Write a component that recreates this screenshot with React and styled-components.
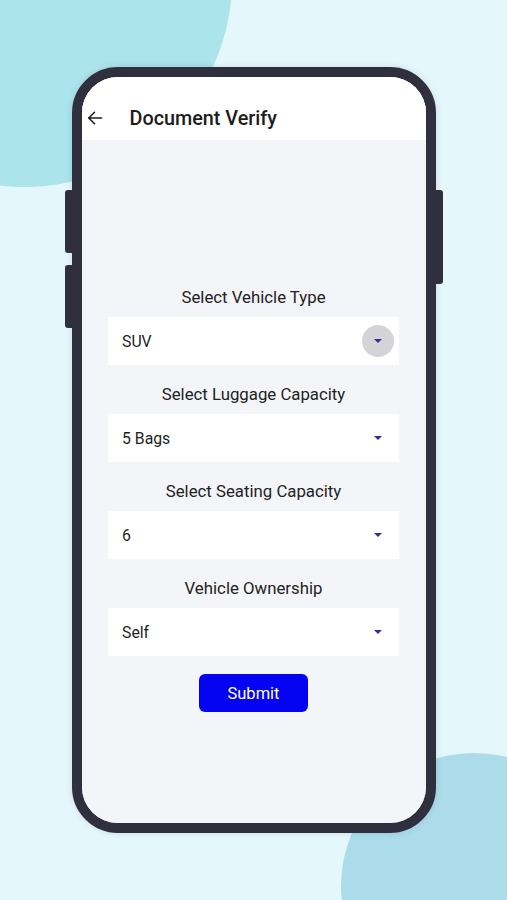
import React from 'react';
import styled, { createGlobalStyle } from 'styled-components';

const GlobalStyle = createGlobalStyle`
    body {
        margin: 0;
        font-family: Roboto, "Noto Sans", Arial, sans-serif;
    }
`;

const Page = styled.div`
    position: relative;
    width: 507px;
    height: 900px;
    overflow: hidden;
    background: #e4f8fc;
    display: flex;
    justify-content: center;
    padding-top: 67px;
    box-sizing: border-box;
`;

const Blob = styled.div`
    position: absolute;
    border-radius: 50%;
    background: ${(p) => p.color};
    left: ${(p) => p.cx - p.r}px;
    top: ${(p) => p.cy - p.r}px;
    width: ${(p) => p.r * 2}px;
    height: ${(p) => p.r * 2}px;
`;

const Phone = styled.div`
    position: relative;
    width: 344px;
    height: 746px;
    border: 10px solid #302f3e;
    border-radius: 46px;
    box-shadow: 0 0 6px rgba(60, 80, 100, 0.18);
    z-index: 1;
`;

const SideButton = styled.div`
    position: absolute;
    top: ${(p) => p.top}px;
    height: ${(p) => p.h}px;
    width: 8px;
    background: #302f3e;
    ${(p) => (p.right ? 'right: -17px; border-radius: 0 3px 3px 0;' : 'left: -17px; border-radius: 3px 0 0 3px;')}
`;

const Screen = styled.div`
    width: 100%;
    height: 100%;
    border-radius: 36px;
    overflow: hidden;
    background: #f4f5f8;
    display: flex;
    flex-direction: column;
`;

const Header = styled.div`
    height: 63px;
    background: #fff;
    display: flex;
    align-items: center;
    padding: 0 0 0 5px;
    flex-shrink: 0;
`;

const BackButton = styled.div`
    width: 16px;
    height: 16px;
    display: flex;
    align-items: center;
    margin-top: 18px;
`;

const Title = styled.h1`
    margin: 19px 0 0 27px;
    font-size: 19.8px;
    font-weight: 500;
    color: #1c1c1c;
`;

const Form = styled.div`
    display: flex;
    flex-direction: column;
    align-items: center;
    padding-top: 147px;
`;

const Label = styled.div`
    height: 20px;
    line-height: 20px;
    font-size: 16.8px;
    color: #222;
    margin-bottom: 10px;
`;

const Select = styled.div`
    width: 291px;
    height: 48px;
    background: #fff;
    display: flex;
    align-items: center;
    justify-content: space-between;
    padding: 0 5px 0 14px;
    box-sizing: border-box;
    font-size: 15.8px;
    color: #1e1e1e;
    margin-bottom: ${(p) => (p.last ? 18 : 19)}px;
`;

const Caret = styled.div`
    width: 32px;
    height: 32px;
    border-radius: 50%;
    background: ${(p) => (p.active ? '#d4d4d8' : 'transparent')};
    display: flex;
    align-items: center;
    justify-content: center;

    &::after {
        content: '';
        border-left: 4.5px solid transparent;
        border-right: 4.5px solid transparent;
        border-top: 4.5px solid #3a2a9c;
    }
`;

const SubmitButton = styled.button`
    width: 109px;
    height: 38px;
    border: none;
    border-radius: 6px;
    background: #0303f2;
    color: #fff;
    font-family: inherit;
    font-size: 16.5px;
`;

const fields = [
    { label: 'Select Vehicle Type', value: 'SUV', active: true },
    { label: 'Select Luggage Capacity', value: '5 Bags' },
    { label: 'Select Seating Capacity', value: '6' },
    { label: 'Vehicle Ownership', value: 'Self' },
];

export default function App() {
    return (
        <Page>
            <GlobalStyle />
            <Blob color="#ace4ec" cx={25} cy={-20} r={207} />
            <Blob color="#acdcea" cx={474} cy={886} r={133} />
            <Phone>
                <SideButton top={113} h={63} />
                <SideButton top={188} h={63} />
                <SideButton right top={113} h={94} />
                <Screen>
                    <Header>
                        <BackButton>
                            <svg width="16" height="16" viewBox="0 0 16 16" fill="none" stroke="#1c1c1c" strokeWidth="1.6" strokeLinecap="round" strokeLinejoin="round">
                                <path d="M14.5 8H1.8" />
                                <path d="M7.5 2.3L1.8 8l5.7 5.7" />
                            </svg>
                        </BackButton>
                        <Title>Document Verify</Title>
                    </Header>
                    <Form>
                        {fields.map((f, i) => (
                            <React.Fragment key={f.label}>
                                <Label>{f.label}</Label>
                                <Select last={i === fields.length - 1}>
                                    {f.value}
                                    <Caret active={f.active} />
                                </Select>
                            </React.Fragment>
                        ))}
                        <SubmitButton>Submit</SubmitButton>
                    </Form>
                </Screen>
            </Phone>
        </Page>
    );
}
